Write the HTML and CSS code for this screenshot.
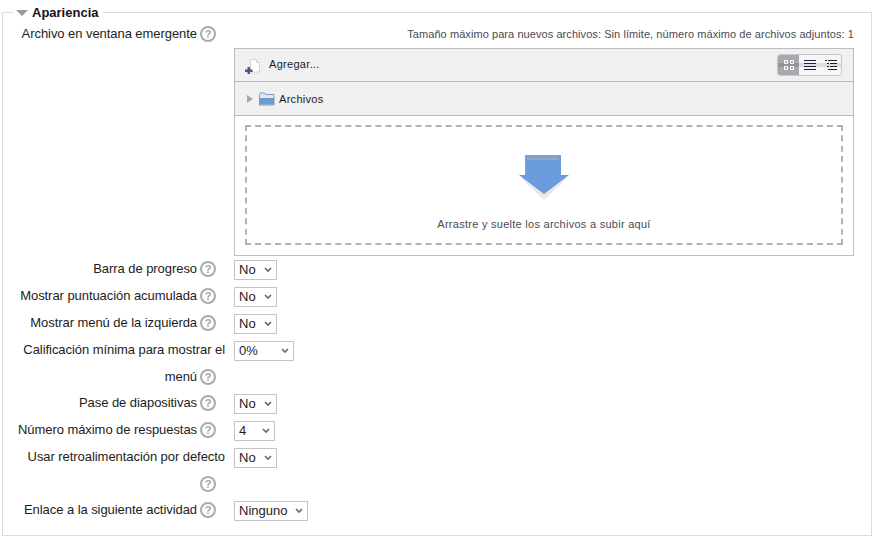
FILE: index.html
```html
<!DOCTYPE html>
<html lang="es">
<head>
<meta charset="utf-8">
<title>Apariencia</title>
<link rel="stylesheet" href="styles.css">
</head>
<body>
<fieldset class="panel">
  <legend class="panel-legend">
    <span class="caret"></span><span>Apariencia</span>
  </legend>
  <div class="row row-file">
    <div class="label">Archivo en ventana emergente<span class="help">?</span></div>
    <div class="field">
      <div class="limits">Tamaño máximo para nuevos archivos: Sin límite, número máximo de archivos adjuntos: 1</div>
      <div class="picker">
        <div class="toolbar">
          <div class="add">
            <svg class="add-icon" viewBox="0 0 16 16" width="16" height="16">
              <path d="M5.500 1.500h6l3 3v9.500h-9z" fill="#fff" stroke="#d4d4d4"/>
              <path d="M11.500 1.500v3h3" fill="#f0f0f0" stroke="#d4d4d4"/>
              <path d="M2.500 9h2.500v2.500h2.500v2.500h-2.500v2h-2.500v-2h-2.500v-2.500h2.500z" fill="#46587c"/>
            </svg>
            <span class="add-text">Agregar...</span>
          </div>
          <div class="views">
            <span class="view view-on">
              <svg viewBox="0 0 12 12" width="12" height="12"><path d="M1.500 1.500h3v3h-3zM7.500 1.500h3v3h-3zM1.500 7.500h3v3h-3zM7.500 7.500h3v3h-3z" fill="none" stroke="#fff"/></svg>
            </span>
            <span class="view">
              <svg viewBox="0 0 12 12" width="12" height="12"><path d="M0 1.500h12M0 4.500h12M0 7.500h12M0 10.500h12" stroke="#2d1740"/></svg>
            </span>
            <span class="view">
              <svg viewBox="0 0 12 12" width="12" height="12"><path d="M0 1.500h2M3 1.500h9M2 4.500h2M5 4.500h7M2 7.500h2M5 7.500h7M3 10.500h9" stroke="#2d1740"/></svg>
            </span>
          </div>
        </div>
        <div class="path">
          <span class="path-arrow"></span>
          <svg class="folder" viewBox="0 0 16 14" width="16" height="14">
            <path d="M0.500 2.500l1-1.500h4l1 1.500h8.500v10.500h-14.500z" fill="#dfe7f0" stroke="#7b9cc0"/>
            <path d="M1 6h14v6.500h-14z" fill="#6b9bd0"/>
          </svg>
          <span>Archivos</span>
        </div>
        <div class="drop-wrap">
          <div class="drop">
            <svg class="drop-arrow" viewBox="0 0 52 46" width="52" height="46">
              <path d="M3 23h46L26 45z" fill="#000" opacity=".09"/>
              <path d="M7 1h36v19h8L26 39 1 20h7z" fill="#6a9bdd"/>
              <path d="M7 0h1v20H7zM8 0h35v1H8z" fill="#97a4b8"/>
              <path d="M9 2h32v3H9z" fill="#9ca3ae"/>
            </svg>
            <div class="drop-text">Arrastre y suelte los archivos a subir aquí</div>
          </div>
        </div>
      </div>
    </div>
  </div>
  <div class="row">
    <div class="label">Barra de progreso<span class="help">?</span></div>
    <div class="field"><select class="sel sel-no"><option>No</option></select></div>
  </div>
  <div class="row">
    <div class="label">Mostrar puntuación acumulada<span class="help">?</span></div>
    <div class="field"><select class="sel sel-no"><option>No</option></select></div>
  </div>
  <div class="row">
    <div class="label">Mostrar menú de la izquierda<span class="help">?</span></div>
    <div class="field"><select class="sel sel-no"><option>No</option></select></div>
  </div>
  <div class="row">
    <div class="label">Calificación mínima para mostrar el menú<span class="help">?</span></div>
    <div class="field"><select class="sel sel-pct"><option>0%</option></select></div>
  </div>
  <div class="row">
    <div class="label">Pase de diapositivas<span class="help">?</span></div>
    <div class="field"><select class="sel sel-no"><option>No</option></select></div>
  </div>
  <div class="row">
    <div class="label">Número máximo de respuestas<span class="help">?</span></div>
    <div class="field"><select class="sel sel-num"><option>4</option></select></div>
  </div>
  <div class="row">
    <div class="label">Usar retroalimentación por defecto<span class="help">?</span></div>
    <div class="field"><select class="sel sel-no"><option>No</option></select></div>
  </div>
  <div class="row">
    <div class="label">Enlace a la siguiente actividad<span class="help">?</span></div>
    <div class="field"><select class="sel sel-link"><option>Ninguno</option></select></div>
  </div>
</fieldset>
</body>
</html>
```
FILE: styles.css
```css
* { box-sizing: border-box; }
html, body { margin: 0; padding: 0; background: #fff; }
body {
  width: 873px;
  height: 539px;
  overflow: hidden;
  padding: 5px 1px 0 2px;
  font-family: "Liberation Sans", Arial, sans-serif;
  font-size: 13px;
  line-height: 26.5px;
  color: #1c1c1c;
}
.panel {
  margin: 0;
  padding: 0 0 14px;
  height: 531px;
  border: 1px solid #dcdcdc;
  min-width: 0;
}
.panel-legend {
  display: flex;
  align-items: center;
  margin-left: 10px;
  padding: 0 5px 0 3px;
  height: 15px;
  line-height: 15px;
  font-size: 13px;
  font-weight: 700;
  color: #1c1020;
}
.caret {
  width: 0;
  height: 0;
  margin-right: 4px;
  border-left: 6px solid transparent;
  border-right: 6px solid transparent;
  border-top: 6px solid #9a9a9a;
}
.row {
  display: grid;
  grid-template-columns: 222px 1fr;
  column-gap: 9px;
  min-height: 27px;
}
.label {
  padding-left: 4px;
  text-align: right;
  letter-spacing: -.06px;
}
.row-file .label { padding-top: 1px; }
.help {
  display: inline-block;
  width: 16px;
  height: 16px;
  margin: 0 9px 0 3px;
  border: 2px solid #ababab;
  border-radius: 50%;
  background: #fff;
  color: #a4a4a4;
  font-size: 11px;
  font-weight: 700;
  line-height: 12px;
  text-align: center;
  letter-spacing: 0;
  vertical-align: 0;
}
.field { min-width: 0; padding-right: 17px; }
.limits {
  height: 28px;
  text-align: right;
  font-size: 11px;
  color: #4a4a55;
  letter-spacing: .07px;
  line-height: 29px;
}
.picker {
  display: flex;
  flex-direction: column;
  height: 208px;
  border: 1px solid #bdbdbd;
  background: #f0f0f0;
  font-size: 11px;
  line-height: 14px;
}
.toolbar {
  display: flex;
  align-items: center;
  justify-content: space-between;
  height: 33px;
  padding: 0 11px 0 10px;
  border-bottom: 1px solid #bdbdbd;
}
.add { display: flex; align-items: center; gap: 8px; letter-spacing: .3px; }
.add-icon { margin-top: 1px; }
.add-text { margin-top: -3px; }
.views {
  display: flex;
  height: 22px;
  border: 1px solid #c8c8c8;
  border-radius: 3px;
  background: linear-gradient(#f6f6f6 0 40%, #dedede 40% 60%, #f6f6f6 60%);
  overflow: hidden;
}
.view {
  display: flex;
  align-items: center;
  justify-content: center;
  width: 21px;
}
.view-on { background: linear-gradient(#a8a9ae 0 40%, #93949a 40% 60%, #a8a9ae 60%); }
.path {
  display: flex;
  align-items: center;
  height: 34px;
  padding-left: 12px;
  border-bottom: 1px solid #bdbdbd;
  letter-spacing: .3px;
}
.path-arrow {
  width: 0;
  height: 0;
  margin-right: 6px;
  border-top: 4px solid transparent;
  border-bottom: 4px solid transparent;
  border-left: 6px solid #a8a8a8;
}
.folder { margin-right: 4px; }
.drop-wrap {
  flex: 1;
  padding: 9px 10px 10px;
  background: #fff;
}
.drop {
  height: 100%;
  border: 2px dashed #b3b3b3;
  padding-top: 28px;
  text-align: center;
}
.drop-arrow { display: block; margin: 0 auto; }
.drop-text {
  margin-top: 16px;
  color: #4a4a55;
  letter-spacing: .27px;
}
.sel {
  display: block;
  height: 20px;
  margin-top: 4px;
  padding: 0 0 2px 4px;
  border: 1px solid #c4c4c4;
  border-radius: 0;
  appearance: none;
  background: #fff url("data:image/svg+xml,%3Csvg xmlns='http://www.w3.org/2000/svg' width='8' height='6'%3E%3Cpath d='M1 1l3 3 3-3' fill='none' stroke='%23705f80' stroke-width='1.600'/%3E%3C/svg%3E") no-repeat right 4px center;
  font-family: inherit;
  font-size: 13px;
  color: #1c1c1c;
}
.sel-no { width: 43px; }
.sel-pct { width: 60px; }
.sel-num { width: 41px; }
.sel-link { width: 74px; }
```
